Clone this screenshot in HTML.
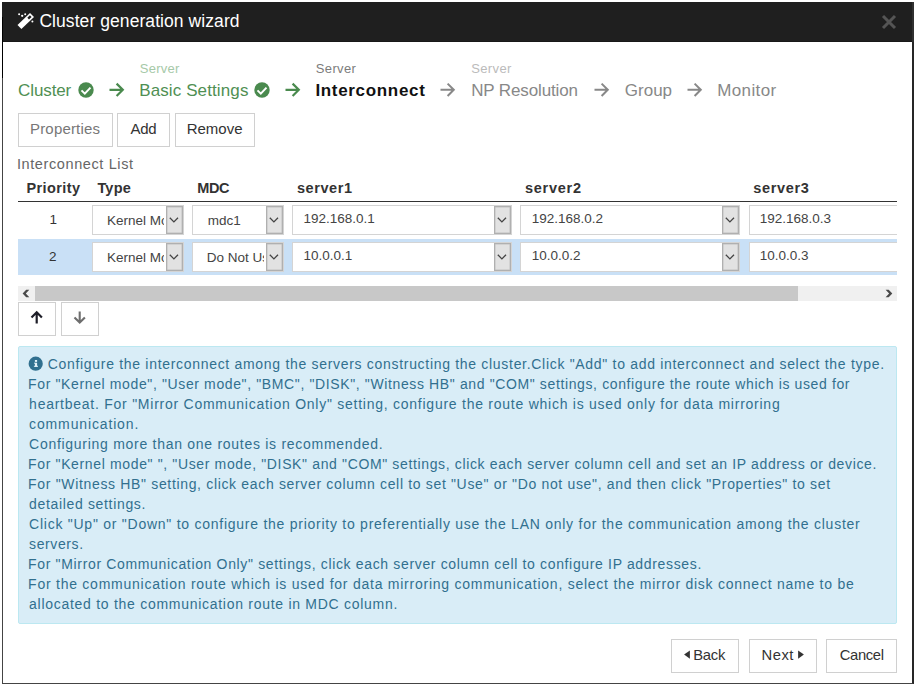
<!DOCTYPE html><html><head><meta charset="utf-8"><style>
*{box-sizing:border-box;margin:0;padding:0}
html,body{width:916px;height:686px;background:#fff;overflow:hidden}
body{position:relative;font-family:"Liberation Sans",sans-serif}
.t{position:absolute;white-space:nowrap}
.b{position:absolute}
.btn{position:absolute;border:1px solid #d0d0d0;background:#fff}
.sel{position:absolute;border:1px solid #d4d4d4;background:#fff;overflow:hidden}
.dd{position:absolute;top:0;right:0;bottom:0;width:17px;background:#e2e2e2;border:1px solid #b0b0b0;box-shadow:inset 0 0 0 0.5px #c0c0c0}
</style></head><body>
<div class="b" style="left:2px;top:2px;width:912px;height:682px;border-left:1px solid #444;border-right:2px solid #262626;border-bottom:1px solid #444;background:#fff"></div>
<div class="b" style="left:2px;top:2px;width:910px;height:40px;background:#1f1f1f;border-bottom:1px solid #181818"></div>
<div class="b" style="left:912px;top:2px;width:2px;height:40px;background:#303030"></div>
<div class="b" style="left:2px;top:17px;width:1px;height:61px;background:#000"></div>
<svg class="b" style="left:14px;top:10px" width="24" height="22" viewBox="14 10 24 22">
<path d="M17.5 25.1 L21.4 28.9 L34 16.9 L30 13 Z" fill="#fff"/>
<path d="M31.6 16.9 L29.9 15.2 L27.3 17.7 L29.0 19.4 Z" fill="#1f1f1f"/>
<circle cx="19.1" cy="14.3" r="1.0" fill="#fff"/><circle cx="22.2" cy="15.8" r="1.15" fill="#fff"/><circle cx="25.2" cy="14.2" r="1.0" fill="#fff"/><circle cx="32.4" cy="21.5" r="1.0" fill="#fff"/>
</svg>
<svg class="b" style="left:881px;top:14px" width="16" height="16" viewBox="0 0 16 16"><path d="M2 2 L14 14 M14 2 L2 14" stroke="#555" stroke-width="3"/></svg>
<svg class="b" style="left:77.6px;top:81.6px" width="16" height="16" viewBox="0 0 16 16"><circle cx="8" cy="8" r="7.7" fill="#4a8a4e"/><path d="M3.5 8.4 L6.8 11.6 L12.5 5.6" stroke="#fff" stroke-width="2" fill="none"/></svg>
<svg class="b" style="left:108.0px;top:81px" width="18" height="18" viewBox="0 0 18 18"><path d="M1.5 8.8 H14 M8.6 2.6 L14.8 8.8 L8.6 15" stroke="#4a8a4e" stroke-width="2.2" fill="none"/></svg>
<svg class="b" style="left:254.0px;top:81.6px" width="16" height="16" viewBox="0 0 16 16"><circle cx="8" cy="8" r="7.7" fill="#4a8a4e"/><path d="M3.5 8.4 L6.8 11.6 L12.5 5.6" stroke="#fff" stroke-width="2" fill="none"/></svg>
<svg class="b" style="left:284.0px;top:81px" width="18" height="18" viewBox="0 0 18 18"><path d="M1.5 8.8 H14 M8.6 2.6 L14.8 8.8 L8.6 15" stroke="#4a8a4e" stroke-width="2.2" fill="none"/></svg>
<svg class="b" style="left:439.3px;top:81px" width="18" height="18" viewBox="0 0 18 18"><path d="M1.5 8.8 H14 M8.6 2.6 L14.8 8.8 L8.6 15" stroke="#888" stroke-width="2" fill="none"/></svg>
<svg class="b" style="left:593.3px;top:81px" width="18" height="18" viewBox="0 0 18 18"><path d="M1.5 8.8 H14 M8.6 2.6 L14.8 8.8 L8.6 15" stroke="#888" stroke-width="2" fill="none"/></svg>
<svg class="b" style="left:686.3px;top:81px" width="18" height="18" viewBox="0 0 18 18"><path d="M1.5 8.8 H14 M8.6 2.6 L14.8 8.8 L8.6 15" stroke="#888" stroke-width="2" fill="none"/></svg>
<div class="btn" style="left:18px;top:113px;width:95px;height:34px;background:#fff"></div>
<div class="btn" style="left:117px;top:113px;width:53px;height:34px;background:#fff"></div>
<div class="btn" style="left:175px;top:113px;width:80px;height:34px;background:#fff"></div>
<div class="b" style="left:18px;top:176px;width:879px;height:100px;overflow:hidden">
<div class="b" style="left:0px;top:25px;width:879px;height:1px;background:#333"></div>
<div class="b" style="left:0px;top:63px;width:879px;height:36px;background:#c9e0f6"></div>
<div class="sel" style="left:74px;top:29px;width:92px;height:30px"><div class="dd"><svg style="position:absolute;left:2.4px;top:10.4px" width="10" height="7" viewBox="0 0 10 7"><path d="M0.8 0.8 L4.9 4.9 L9 0.8" stroke="#444" stroke-width="1.3" fill="none"/></svg></div></div>
<div class="sel" style="left:174px;top:29px;width:92px;height:30px"><div class="dd"><svg style="position:absolute;left:2.4px;top:10.4px" width="10" height="7" viewBox="0 0 10 7"><path d="M0.8 0.8 L4.9 4.9 L9 0.8" stroke="#444" stroke-width="1.3" fill="none"/></svg></div></div>
<div class="sel" style="left:274px;top:29px;width:220px;height:30px"><div class="dd"><svg style="position:absolute;left:2.4px;top:10.4px" width="10" height="7" viewBox="0 0 10 7"><path d="M0.8 0.8 L4.9 4.9 L9 0.8" stroke="#444" stroke-width="1.3" fill="none"/></svg></div></div>
<div class="sel" style="left:502px;top:29px;width:220px;height:30px"><div class="dd"><svg style="position:absolute;left:2.4px;top:10.4px" width="10" height="7" viewBox="0 0 10 7"><path d="M0.8 0.8 L4.9 4.9 L9 0.8" stroke="#444" stroke-width="1.3" fill="none"/></svg></div></div>
<div class="sel" style="left:731px;top:29px;width:220px;height:30px"><div class="dd"><svg style="position:absolute;left:2.4px;top:10.4px" width="10" height="7" viewBox="0 0 10 7"><path d="M0.8 0.8 L4.9 4.9 L9 0.8" stroke="#444" stroke-width="1.3" fill="none"/></svg></div></div>
<div class="sel" style="left:74px;top:66px;width:92px;height:30px"><div class="dd"><svg style="position:absolute;left:2.4px;top:10.4px" width="10" height="7" viewBox="0 0 10 7"><path d="M0.8 0.8 L4.9 4.9 L9 0.8" stroke="#444" stroke-width="1.3" fill="none"/></svg></div></div>
<div class="sel" style="left:174px;top:66px;width:92px;height:30px"><div class="dd"><svg style="position:absolute;left:2.4px;top:10.4px" width="10" height="7" viewBox="0 0 10 7"><path d="M0.8 0.8 L4.9 4.9 L9 0.8" stroke="#444" stroke-width="1.3" fill="none"/></svg></div></div>
<div class="sel" style="left:274px;top:66px;width:220px;height:30px"><div class="dd"><svg style="position:absolute;left:2.4px;top:10.4px" width="10" height="7" viewBox="0 0 10 7"><path d="M0.8 0.8 L4.9 4.9 L9 0.8" stroke="#444" stroke-width="1.3" fill="none"/></svg></div></div>
<div class="sel" style="left:502px;top:66px;width:220px;height:30px"><div class="dd"><svg style="position:absolute;left:2.4px;top:10.4px" width="10" height="7" viewBox="0 0 10 7"><path d="M0.8 0.8 L4.9 4.9 L9 0.8" stroke="#444" stroke-width="1.3" fill="none"/></svg></div></div>
<div class="sel" style="left:731px;top:66px;width:220px;height:30px"><div class="dd"><svg style="position:absolute;left:2.4px;top:10.4px" width="10" height="7" viewBox="0 0 10 7"><path d="M0.8 0.8 L4.9 4.9 L9 0.8" stroke="#444" stroke-width="1.3" fill="none"/></svg></div></div>
<div class="t" style="left:89.00px;top:35.62px;width:57.0px;overflow:hidden;font-size:13.5px;line-height:17px;color:#444">Kernel Mode</div>
<div class="t" style="left:189.80px;top:35.62px;width:56.2px;overflow:hidden;font-size:13.5px;line-height:17px;color:#444">mdc1</div>
<div class="t" style="left:285.40px;top:33.92px;width:188.6px;overflow:hidden;font-size:13.5px;line-height:17px;color:#444">192.168.0.1</div>
<div class="t" style="left:513.80px;top:33.92px;width:188.2px;overflow:hidden;font-size:13.5px;line-height:17px;color:#444">192.168.0.2</div>
<div class="t" style="left:741.70px;top:33.92px;width:189.3px;overflow:hidden;font-size:13.5px;line-height:17px;color:#444">192.168.0.3</div>
<div class="t" style="left:89.00px;top:72.62px;width:57.0px;overflow:hidden;font-size:13.5px;line-height:17px;color:#444">Kernel Mode</div>
<div class="t" style="left:188.80px;top:72.62px;width:57.2px;overflow:hidden;font-size:13.5px;line-height:17px;color:#444">Do Not Use</div>
<div class="t" style="left:285.40px;top:70.92px;width:188.6px;overflow:hidden;font-size:13.5px;line-height:17px;color:#444">10.0.0.1</div>
<div class="t" style="left:513.80px;top:70.92px;width:188.2px;overflow:hidden;font-size:13.5px;line-height:17px;color:#444">10.0.0.2</div>
<div class="t" style="left:741.70px;top:70.92px;width:189.3px;overflow:hidden;font-size:13.5px;line-height:17px;color:#444">10.0.0.3</div>
<div class="t" style="left:8.50px;top:2.98px;font-size:14.5px;line-height:18px;color:#333;font-weight:bold;letter-spacing:0.400px;">Priority</div>
<div class="t" style="left:79.40px;top:2.98px;font-size:14.5px;line-height:18px;color:#333;font-weight:bold;letter-spacing:0.199px;">Type</div>
<div class="t" style="left:179.30px;top:2.98px;font-size:14.5px;line-height:18px;color:#333;font-weight:bold;letter-spacing:-0.375px;">MDC</div>
<div class="t" style="left:278.90px;top:2.98px;font-size:14.5px;line-height:18px;color:#333;font-weight:bold;letter-spacing:0.576px;">server1</div>
<div class="t" style="left:507.00px;top:2.98px;font-size:14.5px;line-height:18px;color:#333;font-weight:bold;letter-spacing:0.726px;">server2</div>
<div class="t" style="left:735.20px;top:2.98px;font-size:14.5px;line-height:18px;color:#333;font-weight:bold;letter-spacing:0.660px;">server3</div>
<div class="t" style="left:31.60px;top:34.62px;font-size:13.5px;line-height:17px;color:#333;">1</div>
<div class="t" style="left:30.90px;top:71.72px;font-size:13.5px;line-height:17px;color:#333;">2</div>
</div>
<div class="b" style="left:18px;top:286px;width:879px;height:15px;background:#f0f0f0"></div>
<div class="b" style="left:35px;top:286px;width:763px;height:15px;background:#c8c8c8"></div>
<svg class="b" style="left:20px;top:288px" width="12" height="12" viewBox="20 288 12 12"><path d="M22.6 293.5 L26.2 289.8 L29.3 289.8 L25.8 293.5 L29.3 297.2 L26.2 297.2 Z" fill="#4a4a4a"/></svg>
<svg class="b" style="left:883px;top:288px" width="12" height="12" viewBox="883 288 12 12"><path d="M892.3 293.5 L888.7 289.8 L885.6 289.8 L889.1 293.5 L885.6 297.2 L888.7 297.2 Z" fill="#4a4a4a"/></svg>
<div class="btn" style="left:18px;top:302px;width:38px;height:34px;background:#fff"></div>
<div class="btn" style="left:61px;top:302px;width:38px;height:34px;background:#fff"></div>
<svg class="b" style="left:26px;top:306px" width="22" height="22" viewBox="26 306 22 22"><path d="M36.7 323.5 V312.8 M31.5 317.5 L36.7 312.3 L41.9 317.5" stroke="#1e1e28" stroke-width="2.2" fill="none"/></svg>
<svg class="b" style="left:69px;top:306px" width="22" height="22" viewBox="69 306 22 22"><path d="M79.7 311.6 V322.3 M74.5 317.4 L79.7 322.6 L84.9 317.4" stroke="#6e6e6e" stroke-width="2.1" fill="none"/></svg>
<div class="b" style="left:18px;top:346px;width:879px;height:278px;background:#d9edf7;border:1px solid #bce8f1;border-radius:2px"></div>
<svg class="b" style="left:28px;top:356px" width="16" height="16" viewBox="0 0 16 16"><circle cx="7.7" cy="7.7" r="7.1" fill="#31708f"/><rect x="6.9" y="4" width="2.2" height="1.9" fill="#e4f2f9"/><rect x="6.9" y="6.7" width="2.2" height="4.1" fill="#e4f2f9"/><rect x="6" y="6.7" width="1.2" height="0.9" fill="#e4f2f9"/><rect x="5.9" y="9.8" width="4.1" height="1" fill="#e4f2f9"/></svg>
<div class="btn" style="left:671px;top:639px;width:68px;height:34px;background:#fff"></div>
<div class="btn" style="left:749px;top:639px;width:68px;height:34px;background:#fff"></div>
<div class="btn" style="left:826px;top:639px;width:71px;height:34px;background:#fff"></div>
<svg class="b" style="left:684px;top:650px" width="6" height="10" viewBox="0 0 6 10"><path d="M5.9 0.4 L0.1 4.6 L5.9 8.8 Z" fill="#333"/></svg>
<svg class="b" style="left:798px;top:650px" width="6" height="10" viewBox="0 0 6 10"><path d="M0.1 0.4 L5.9 4.6 L0.1 8.8 Z" fill="#333"/></svg>
<div class="t" style="left:39.40px;top:10.14px;font-size:17.5px;line-height:22px;color:#fff;letter-spacing:0.071px;">Cluster generation wizard</div>
<div class="t" style="left:18.10px;top:80.11px;font-size:17px;line-height:21px;color:#4f8f53;letter-spacing:-0.114px;">Cluster</div>
<div class="t" style="left:139.20px;top:80.11px;font-size:17px;line-height:21px;color:#4f8f53;letter-spacing:0.114px;">Basic Settings</div>
<div class="t" style="left:315.40px;top:79.61px;font-size:17px;line-height:21px;color:#111;font-weight:bold;letter-spacing:0.677px;">Interconnect</div>
<div class="t" style="left:471.20px;top:80.11px;font-size:17px;line-height:21px;color:#888;letter-spacing:-0.126px;">NP Resolution</div>
<div class="t" style="left:624.80px;top:80.11px;font-size:17px;line-height:21px;color:#888;">Group</div>
<div class="t" style="left:717.20px;top:80.11px;font-size:17px;line-height:21px;color:#888;letter-spacing:0.379px;">Monitor</div>
<div class="t" style="left:139.80px;top:61.30px;font-size:13px;line-height:16px;color:#a6c9a8;letter-spacing:0.268px;">Server</div>
<div class="t" style="left:315.80px;top:61.30px;font-size:13px;line-height:16px;color:#7c7c7c;letter-spacing:0.348px;">Server</div>
<div class="t" style="left:471.20px;top:61.30px;font-size:13px;line-height:16px;color:#bbb;letter-spacing:0.368px;">Server</div>
<div class="t" style="left:30.00px;top:119.10px;font-size:15px;line-height:19px;color:#777;letter-spacing:0.182px;">Properties</div>
<div class="t" style="left:130.60px;top:119.10px;font-size:15px;line-height:19px;color:#333;letter-spacing:-0.324px;">Add</div>
<div class="t" style="left:186.70px;top:119.10px;font-size:15px;line-height:19px;color:#333;">Remove</div>
<div class="t" style="left:16.90px;top:155.28px;font-size:14.5px;line-height:18px;color:#666;letter-spacing:0.609px;">Interconnect List</div>
<div class="t" style="left:47.70px;top:355.15px;font-size:14px;line-height:18px;color:#31708f;letter-spacing:0.694px;">Configure the interconnect among the servers constructing the cluster.Click "Add" to add interconnect and select the type.</div>
<div class="t" style="left:28.10px;top:375.15px;font-size:14px;line-height:18px;color:#31708f;letter-spacing:0.624px;">For "Kernel mode", "User mode", "BMC", "DISK", "Witness HB" and "COM" settings, configure the route which is used for</div>
<div class="t" style="left:29.10px;top:395.15px;font-size:14px;line-height:18px;color:#31708f;letter-spacing:0.748px;">heartbeat. For "Mirror Communication Only" setting, configure the route which is used only for data mirroring</div>
<div class="t" style="left:29.10px;top:415.15px;font-size:14px;line-height:18px;color:#31708f;letter-spacing:0.858px;">communication.</div>
<div class="t" style="left:29.10px;top:435.15px;font-size:14px;line-height:18px;color:#31708f;letter-spacing:0.718px;">Configuring more than one routes is recommended.</div>
<div class="t" style="left:28.10px;top:455.15px;font-size:14px;line-height:18px;color:#31708f;letter-spacing:0.639px;">For "Kernel mode" ", "User mode, "DISK" and "COM" settings, click each server column cell and set an IP address or device.</div>
<div class="t" style="left:28.10px;top:475.15px;font-size:14px;line-height:18px;color:#31708f;letter-spacing:0.664px;">For "Witness HB" setting, click each server column cell to set "Use" or "Do not use", and then click "Properties" to set</div>
<div class="t" style="left:29.10px;top:495.15px;font-size:14px;line-height:18px;color:#31708f;letter-spacing:0.660px;">detailed settings.</div>
<div class="t" style="left:29.10px;top:515.15px;font-size:14px;line-height:18px;color:#31708f;letter-spacing:0.745px;">Click "Up" or "Down" to configure the priority to preferentially use the LAN only for the communication among the cluster</div>
<div class="t" style="left:29.10px;top:535.15px;font-size:14px;line-height:18px;color:#31708f;letter-spacing:0.601px;">servers.</div>
<div class="t" style="left:28.10px;top:555.15px;font-size:14px;line-height:18px;color:#31708f;letter-spacing:0.656px;">For "Mirror Communication Only" settings, click each server column cell to configure IP addresses.</div>
<div class="t" style="left:28.10px;top:575.15px;font-size:14px;line-height:18px;color:#31708f;letter-spacing:0.752px;">For the communication route which is used for data mirroring communication, select the mirror disk connect name to be</div>
<div class="t" style="left:29.10px;top:595.15px;font-size:14px;line-height:18px;color:#31708f;letter-spacing:0.720px;">allocated to the communication route in MDC column.</div>
<div class="t" style="left:693.30px;top:645.67px;font-size:14.8px;line-height:18px;color:#333;letter-spacing:-0.299px;">Back</div>
<div class="t" style="left:761.60px;top:645.67px;font-size:14.8px;line-height:18px;color:#333;letter-spacing:0.462px;">Next</div>
<div class="t" style="left:839.80px;top:645.67px;font-size:14.8px;line-height:18px;color:#333;letter-spacing:-0.374px;">Cancel</div>
</body></html>
